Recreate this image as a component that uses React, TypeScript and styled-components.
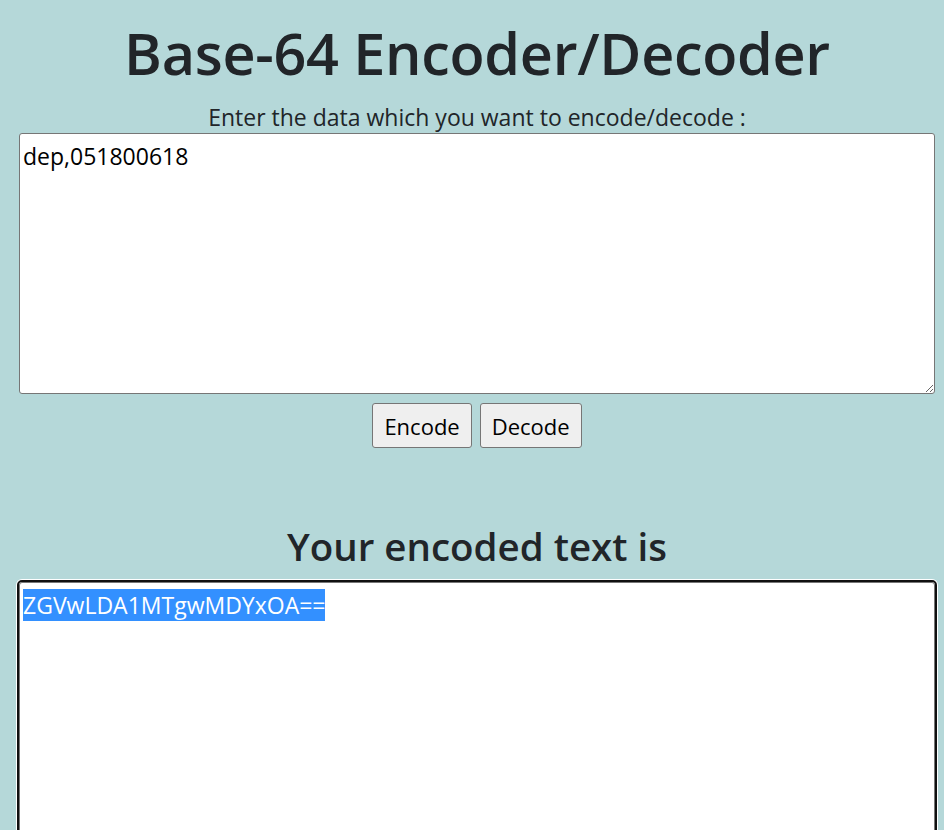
import React, { useEffect, useRef } from 'react';
import styled, { createGlobalStyle } from 'styled-components';

const GlobalStyle = createGlobalStyle`
  html, body {
    margin: 0;
    background: #b5d8d9;
  }
  body {
    font-family: "Open Sans", "Noto Sans", sans-serif;
    color: #212529;
    overflow: hidden;
  }
`;

const Page = styled.main`
  padding: 0 9px 0 19px;
  text-align: center;
`;

const Title = styled.h1`
  margin: 13px 0 0;
  font-size: 57.5px;
  font-weight: 600;
  line-height: 80px;
  letter-spacing: -0.3px;
`;

const Label = styled.p`
  margin: 9px 0 1px;
  font-size: 23px;
  line-height: 30px;
`;

const TextBox = styled.textarea<{ $height: number }>`
  display: block;
  box-sizing: border-box;
  width: 100%;
  height: ${p => p.$height}px;
  margin: 0;
  padding: 8px 3px;
  border: 1px solid #767676;
  border-radius: 3px;
  background: #fff;
  color: #000;
  font-family: "Open Sans", "Noto Sans", sans-serif;
  font-size: 23px;
  line-height: 1.3;
  resize: both;

  &::selection {
    background: #3390ff;
    color: #fff;
  }

  &:focus {
    outline: 2px solid #101010;
    box-shadow: 0 0 0 3px #fff;
  }
`;

const ButtonRow = styled.div`
  display: flex;
  justify-content: center;
  gap: 8px;
  margin-top: 9px;
`;

const Button = styled.button`
  height: 45px;
  padding: 0 11px;
  border: 1px solid #767676;
  border-radius: 3px;
  background: #efefef;
  color: #000;
  font-family: "Open Sans", "Noto Sans", sans-serif;
  font-size: 22px;
`;

const Heading = styled.h2`
  margin: 75px 0 13px;
  font-size: 38.5px;
  font-weight: 600;
  line-height: 1.2;
`;

const App: React.FC = () => {
  const outRef = useRef<HTMLTextAreaElement>(null);

  useEffect(() => {
    if (outRef.current) {
      outRef.current.focus();
      outRef.current.select();
    }
  }, []);

  return (
    <>
      <GlobalStyle />
      <Page>
        <Title>Base-64 Encoder/Decoder</Title>
        <Label>Enter the data which you want to encode/decode :</Label>
        <TextBox $height={261} defaultValue="dep,051800618" />
        <ButtonRow>
          <Button>Encode</Button>
          <Button>Decode</Button>
        </ButtonRow>
        <Heading>Your encoded text is</Heading>
        <TextBox ref={outRef} $height={320} defaultValue="ZGVwLDA1MTgwMDYxOA==" />
      </Page>
    </>
  );
};

export default App;
